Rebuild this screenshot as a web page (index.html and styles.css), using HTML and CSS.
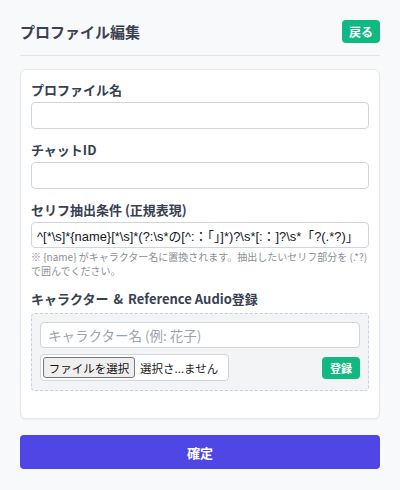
FILE: index.html
```html
<!DOCTYPE html>
<html lang="ja">
<head>
<meta charset="utf-8">
<title>プロファイル編集</title>
<link rel="stylesheet" href="styles.css">
</head>
<body>
<div class="page">
  <header class="header">
    <h1 class="title">プロファイル編集</h1>
    <button class="btn btn-green btn-back" type="button">戻る</button>
  </header>

  <section class="card">
    <div class="field">
      <label class="label">プロファイル名</label>
      <input class="input" type="text">
    </div>
    <div class="field">
      <label class="label">チャットID</label>
      <input class="input" type="text">
    </div>
    <div class="field">
      <label class="label">セリフ抽出条件 (正規表現)</label>
      <input class="input input-regex" type="text" value="^[*\s]*{name}[*\s]*(?:\s*の[^:：「」]*)?\s*[:：]?\s*「?(.*?)」">
      <p class="hint">※ {name} がキャラクター名に置換されます。抽出したいセリフ部分を (.*?) で囲んでください。</p>
    </div>
    <div class="field">
      <label class="label">キャラクター <span class="amp">&amp;</span> Reference Audio登録</label>
      <div class="register-box">
        <input class="input input-char" type="text" placeholder="キャラクター名 (例: 花子)">
        <div class="register-row">
          <div class="file-box">
            <span class="file-btn">ファイルを選択</span>
            <span class="file-name">選択さ...ません</span>
          </div>
          <button class="btn btn-green btn-register" type="button">登録</button>
        </div>
      </div>
    </div>
  </section>

  <button class="btn-confirm" type="button">確定</button>
</div>
</body>
</html>
```

FILE: styles.css
```css
* { box-sizing: border-box; }

html, body {
  margin: 0;
  padding: 0;
  background: #f8f9fb;
}

body {
  font-family: "Noto Sans CJK JP", "Noto Sans", sans-serif;
  color: #374151;
}

.page {
  padding: 20px 20px;
}

.header {
  display: flex;
  align-items: center;
  justify-content: space-between;
  padding-bottom: 12px;
  border-bottom: 1px solid #e3e5e9;
}

.title {
  margin: 0;
  font-size: 15px;
  font-weight: 700;
  line-height: 23px;
  color: #3b4150;
}

.btn {
  border: none;
  font-family: "Noto Sans CJK JP", sans-serif;
  font-weight: 700;
  color: #fff;
  cursor: pointer;
  padding: 0;
}

.btn-green { background: #10b981; }

.btn-back {
  width: 38px;
  height: 23px;
  border-radius: 4px;
  font-size: 12px;
}

.card {
  margin-top: 13px;
  background: #fff;
  border: 1px solid #e5e7eb;
  border-radius: 6px;
  box-shadow: 0 1px 2px rgba(0, 0, 0, 0.05);
  padding: 10px 10px 27px;
}

.field { margin-bottom: 11px; }
.field:last-child { margin-bottom: 0; }

.label {
  display: block;
  font-size: 13px;
  font-weight: 700;
  line-height: 20px;
  margin-bottom: 2px;
  color: #374151;
}

.amp { margin: 0 2px; }

.input {
  display: block;
  width: 100%;
  height: 27px;
  border: 1px solid #d1d5db;
  border-radius: 4px;
  background: #fff;
  padding: 0 6px;
  font-family: "Liberation Sans", "Noto Sans CJK JP", sans-serif;
  font-size: 13px;
  color: #111827;
  outline: none;
}

.input-regex {
  height: 26px;
  padding: 0 4px 0 5px;
  font-size: 12.9px;
}

.hint {
  margin: 2px 0 0;
  font-size: 10px;
  line-height: 14px;
  color: #8a8f98;
}

.register-box {
  margin-top: 4px;
  background: #f3f4f6;
  border: 1px dashed #c9cde0;
  border-radius: 4px;
  padding: 8px 8px 9px;
}

.input-char {
  height: 26px;
  font-family: "Noto Sans CJK JP", sans-serif;
  font-size: 13.5px;
  padding: 0 7px;
}

.input-char::placeholder { color: #9ca3af; }

.register-row {
  display: flex;
  align-items: center;
  justify-content: space-between;
  margin-top: 6px;
}

.file-box {
  display: flex;
  align-items: center;
  width: 189px;
  height: 27px;
  background: #fff;
  border: 1px solid #d1d5db;
  border-radius: 4px;
  padding: 0 2px;
}

.file-btn {
  display: inline-flex;
  align-items: center;
  justify-content: center;
  width: 92px;
  height: 21px;
  background: #efefef;
  border: 1px solid #767676;
  border-radius: 3px;
  font-size: 11.5px;
  color: #111;
}

.file-name {
  margin-left: 5px;
  font-size: 11.5px;
  color: #222;
  white-space: nowrap;
}

.btn-register {
  width: 38px;
  height: 22px;
  border-radius: 4px;
  font-size: 11px;
}

.btn-confirm {
  display: block;
  width: 100%;
  height: 34px;
  margin-top: 16px;
  border: none;
  border-radius: 4px;
  background: #4f46e5;
  color: #fff;
  font-family: "Noto Sans CJK JP", sans-serif;
  font-size: 13px;
  font-weight: 700;
}
```
